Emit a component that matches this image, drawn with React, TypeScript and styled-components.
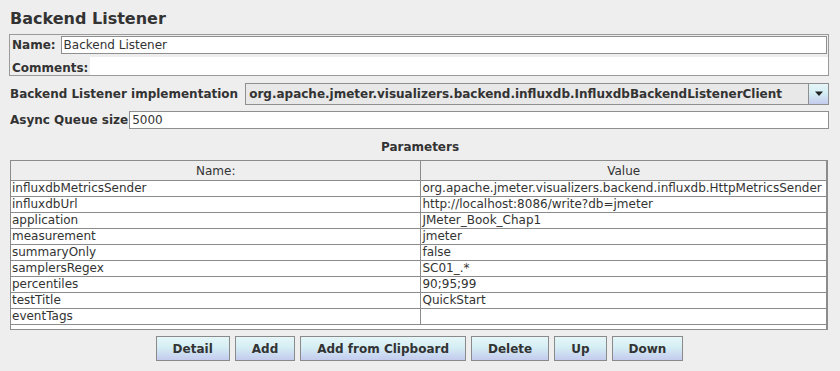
import styled, { createGlobalStyle } from "styled-components";

const params: [string, string][] = [
  ["influxdbMetricsSender", "org.apache.jmeter.visualizers.backend.influxdb.HttpMetricsSender"],
  ["influxdbUrl", "http://localhost:8086/write?db=jmeter"],
  ["application", "JMeter_Book_Chap1"],
  ["measurement", "jmeter"],
  ["summaryOnly", "false"],
  ["samplersRegex", "SC01_.*"],
  ["percentiles", "90;95;99"],
  ["testTitle", "QuickStart"],
  ["eventTags", ""],
];

const buttons = ["Detail", "Add", "Add from Clipboard", "Delete", "Up", "Down"];

function App() {
  return (
    <Page>
      <GlobalStyle />
      <Title>Backend Listener</Title>
      <NamePanel>
        <NameRow>
          <Label>Name:</Label>
          <TextField defaultValue="Backend Listener" />
        </NameRow>
        <CommentsRow>
          <Label>Comments:</Label>
          <CommentsArea />
        </CommentsRow>
      </NamePanel>
      <FieldRow>
        <Label>Backend Listener implementation</Label>
        <Combo>
          <ComboText>org.apache.jmeter.visualizers.backend.influxdb.InfluxdbBackendListenerClient</ComboText>
          <ComboArrow>
            <svg width="10" height="6" viewBox="0 0 10 6">
              <path d="M1 0.5 H9 L5 5 Z" fill="#222" />
            </svg>
          </ComboArrow>
        </Combo>
      </FieldRow>
      <QueueRow>
        <Label>Async Queue size</Label>
        <QueueField defaultValue="5000" />
      </QueueRow>
      <SectionTitle>Parameters</SectionTitle>
      <ScrollPane>
        <Table>
          <colgroup>
            <col style={{ width: "50.3%" }} />
            <col />
          </colgroup>
          <thead>
            <tr>
              <HeadCell>Name:</HeadCell>
              <HeadCell>Value</HeadCell>
            </tr>
          </thead>
          <tbody>
            {params.map(([name, value]) => (
              <tr key={name}>
                <Cell>{name}</Cell>
                <Cell>{value}</Cell>
              </tr>
            ))}
          </tbody>
        </Table>
      </ScrollPane>
      <ButtonBar>
        {buttons.map((b) => (
          <Button key={b}>{b}</Button>
        ))}
      </ButtonBar>
    </Page>
  );
}

const GlobalStyle = createGlobalStyle`
  html, body {
    margin: 0;
    background: #eeeeee;
  }
  body {
    font-family: "DejaVu Sans", Verdana, sans-serif;
    color: #333333;
  }
`;

const Page = styled.div`
  width: 840px;
  height: 371px;
  box-sizing: border-box;
  padding: 0 11px 0 10px;
  display: flex;
  flex-direction: column;
  overflow: hidden;
`;

const Title = styled.h1`
  margin: 0;
  padding-top: 9px;
  height: 25px;
  font-size: 16px;
  line-height: 20px;
  font-weight: bold;
  color: #333333;
`;

const NamePanel = styled.div`
  margin-left: -1px;
  border: 1px solid #9a9a9a;
  height: 40px;
  display: flex;
  flex-direction: column;
`;

const Label = styled.span`
  font-size: 12px;
  font-weight: bold;
  color: #333333;
  white-space: nowrap;
`;

const NameRow = styled.div`
  display: flex;
  align-items: center;
  height: 20px;
  padding: 0 1px 0 2px;
  gap: 5px;
`;

const TextField = styled.input`
  flex: 1;
  height: 18px;
  box-sizing: border-box;
  border: 1px solid #8f8f8f;
  background: #ffffff;
  font-family: "DejaVu Sans", sans-serif;
  font-size: 12px;
  color: #333333;
  padding: 0 2px;
  outline: none;
`;

const CommentsRow = styled.div`
  display: flex;
  align-items: flex-end;
  height: 20px;
  padding-left: 2px;
  gap: 2px;
`;

const CommentsArea = styled.div`
  flex: 1;
  align-self: stretch;
  margin-top: 2px;
  background: #ffffff;
`;

const FieldRow = styled.div`
  display: flex;
  align-items: center;
  margin-top: 7px;
  height: 22px;
  gap: 7px;
`;

const Combo = styled.div`
  flex: 1;
  display: flex;
  height: 22px;
  box-sizing: border-box;
  border: 1px solid #8f8f8f;
  background: #e8e8e8;
`;

const ComboText = styled.span`
  flex: 1;
  padding-left: 3px;
  font-size: 12px;
  font-weight: bold;
  line-height: 20px;
  white-space: nowrap;
  overflow: hidden;
  color: #333333;
  border-right: 1px solid #8f8f8f;
`;

const ComboArrow = styled.span`
  width: 19px;
  display: flex;
  align-items: center;
  justify-content: center;
  background: linear-gradient(180deg, #e6f6f8 0%, #d4eef4 45%, #c4cbee 100%);
`;

const QueueRow = styled.div`
  display: flex;
  align-items: center;
  margin-top: 6px;
  height: 18px;
`;

const QueueField = styled(TextField)`
  margin-left: 1px;
`;

const SectionTitle = styled.div`
  text-align: center;
  font-size: 12px;
  font-weight: bold;
  line-height: 16px;
  margin-top: 10px;
  height: 21px;
  padding-left: 1px;
`;

const ScrollPane = styled.div`
  height: 170px;
  box-sizing: border-box;
  border: 1px solid #8c8c8c;
  border-right-width: 2px;
  background: #ffffff;
  margin-right: 1px;
`;

const Table = styled.table`
  width: 100%;
  border-collapse: collapse;
  table-layout: fixed;
  font-size: 12px;
  color: #333333;
`;

const HeadCell = styled.th`
  height: 19px;
  padding: 0;
  font-weight: normal;
  text-align: center;
  background: #eeeeee;
  border-bottom: 1px solid #8c8c8c;
  border-left: 1px solid #8c8c8c;
  &:first-child {
    border-left: none;
  }
`;

const Cell = styled.td`
  height: 15px;
  padding: 0 0 0 1px;
  line-height: 15px;
  white-space: nowrap;
  overflow: hidden;
  border-bottom: 1px solid #8c8c8c;
  border-left: 1px solid #8c8c8c;
  &:first-child {
    border-left: none;
  }
`;

const ButtonBar = styled.div`
  display: flex;
  justify-content: center;
  gap: 5px;
  margin-top: 6px;
`;

const Button = styled.button`
  height: 25px;
  padding: 0 16px;
  border: 1px solid #8a8a8a;
  background: linear-gradient(180deg, #e6f6f8 0%, #d4eef4 45%, #c4cbee 100%);
  font-family: "DejaVu Sans", sans-serif;
  font-size: 12px;
  font-weight: bold;
  color: #333333;
`;

export default App;
